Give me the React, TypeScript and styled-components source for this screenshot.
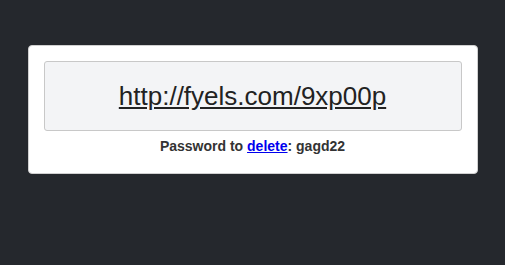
import styled, { createGlobalStyle } from 'styled-components';

const GlobalStyle = createGlobalStyle`
  html, body {
    margin: 0;
    padding: 0;
    background-color: #25282d;
  }
  body {
    font-family: 'Liberation Sans', Arial, Helvetica, sans-serif;
    color: #333;
  }
`;

const Page = styled.main`
  min-height: 265px;
  padding-top: 45px;
  box-sizing: border-box;
`;

const Card = styled.section`
  width: 450px;
  margin: 0 auto;
  box-sizing: border-box;
  background-color: #fff;
  border: 1px solid #d0d0d0;
  border-radius: 4px;
  padding: 15px 15px 19px;
`;

const UrlBox = styled.div`
  height: 70px;
  box-sizing: border-box;
  display: flex;
  align-items: center;
  justify-content: center;
  background-color: #f3f4f6;
  border: 1px solid #c8c8c8;
  border-radius: 3px;

  /* the short link itself */
  a {
    font-size: 26px;
    color: #222;
    text-decoration: underline;
  }
`;

const Note = styled.p`
  margin: 7px 0 0;
  text-align: center;
  font-size: 14px;
  font-weight: bold;
  color: #333;

  a {
    color: #0000ee;
  }
`;

function App() {
  return (
    <>
      <GlobalStyle />
      <Page>
        <Card>
          <UrlBox>
            <a href="#">http://fyels.com/9xp00p</a>
          </UrlBox>
          <Note>
            Password to <a href="#">delete</a>: gagd22
          </Note>
        </Card>
      </Page>
    </>
  );
}

export default App;
